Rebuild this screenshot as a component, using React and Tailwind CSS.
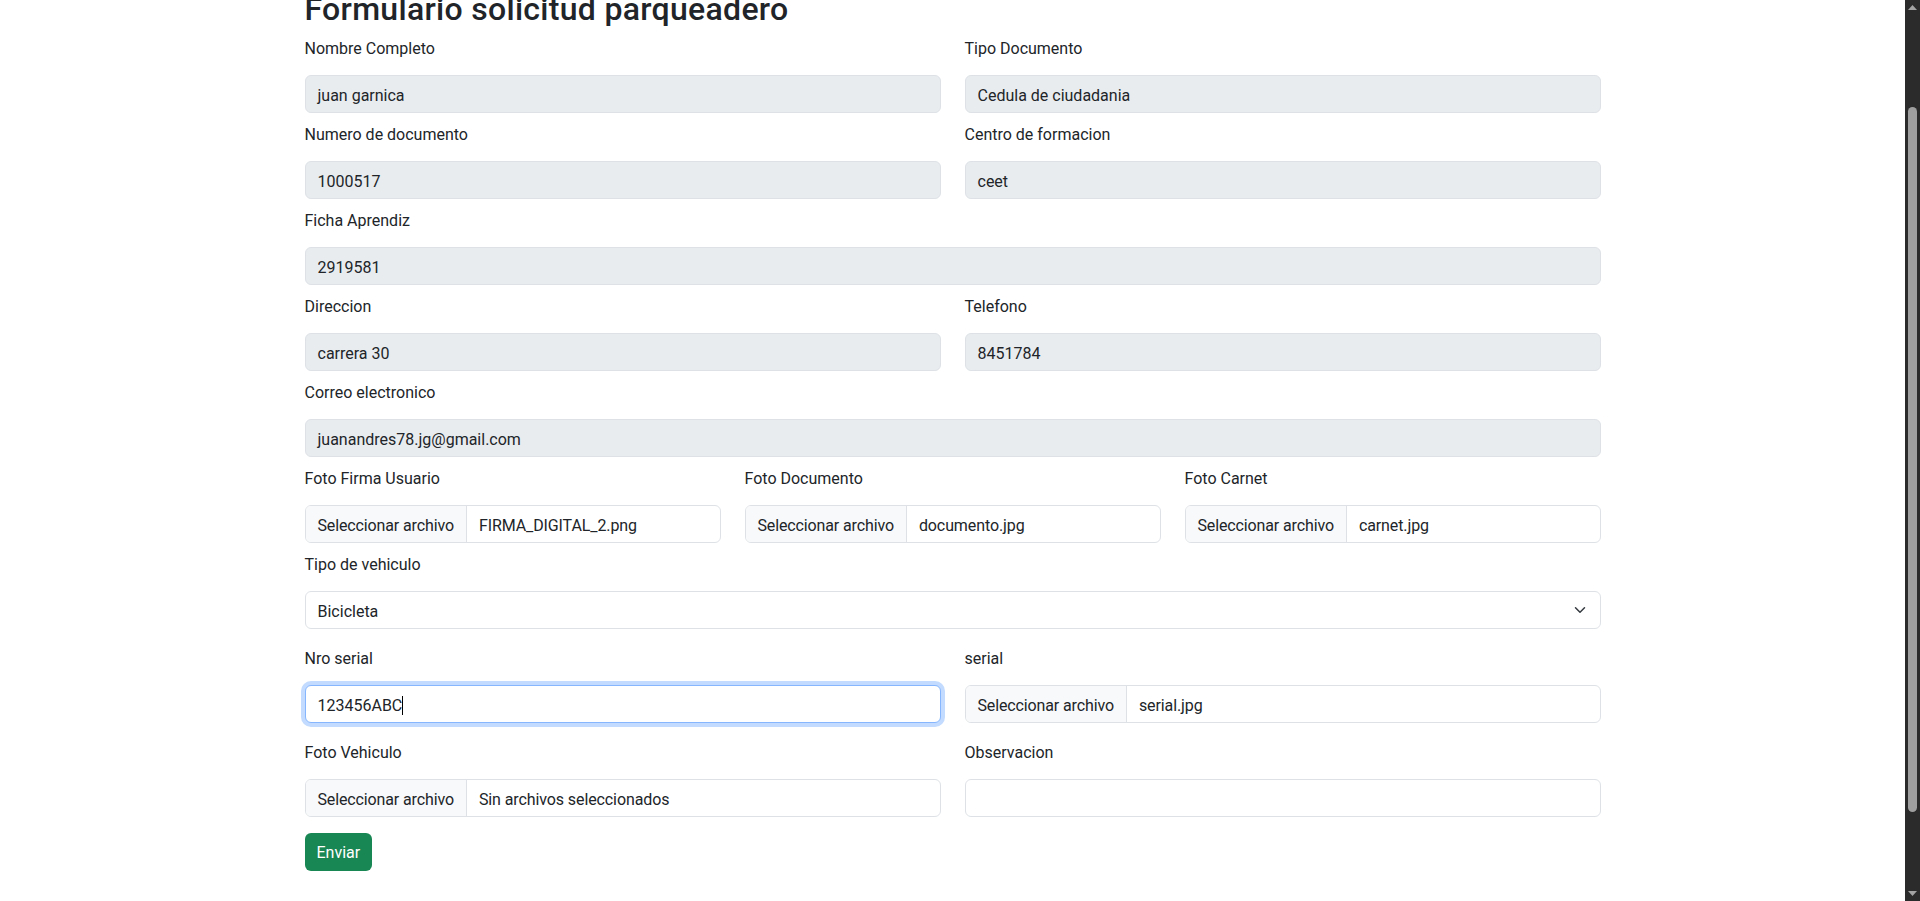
import React from 'react';

const font = { fontFamily: 'Roboto, "Noto Sans", sans-serif' };

const Label = ({ children }) => (
    <label className="block text-base leading-6 pt-px mb-[14px] text-[#212529]">{children}</label>
);

const Disabled = ({ value }) => (
    <div className="h-[38px] rounded-md border border-[#dee2e6] bg-[#e9ecef] px-3 pt-[3px] flex items-center text-base text-[#212529]">
        {value}
    </div>
);

const FileInput = ({ file }) => (
    <div className="h-[38px] rounded-md border border-[#dee2e6] bg-white flex items-stretch overflow-hidden text-base text-[#212529]">
        <span className="bg-[#f8f9fa] border-r border-[#dee2e6] px-3 pt-[3px] flex items-center whitespace-nowrap tracking-[-0.13px]">
            Seleccionar archivo
        </span>
        <span className="pl-3 pt-[3px] flex items-center whitespace-nowrap tracking-[-0.1px]">{file}</span>
    </div>
);

const Field = ({ label, children }) => (
    <div>
        <Label>{label}</Label>
        {children}
    </div>
);

const Scrollbar = () => (
    <div className="w-[15px] shrink-0 bg-[#2b2b2b] flex flex-col items-center">
        <svg width="15" height="17" viewBox="0 0 15 17" className="shrink-0">
            <polygon points="3,10 12,10 7.5,5" fill="#a3a3a3" />
        </svg>
        <div className="mt-[90px] h-[705px] w-[9px] rounded-[5px] bg-[#9f9f9f]" />
        <div className="flex-1" />
        <svg width="15" height="17" viewBox="0 0 15 17" className="shrink-0">
            <polygon points="3,7 12,7 7.5,12" fill="#a3a3a3" />
        </svg>
    </div>
);

export default function App() {
    return (
        <div className="flex h-[901px] overflow-hidden bg-white" style={font}>
            <div className="flex-1 min-w-0">
                <div className="w-[1320px] mx-auto px-3 -mt-[10px]">
                    <h2 className="text-[32px] font-medium leading-[1.2] mb-2 text-[#212529] tracking-[0.3px]">
                        Formulario solicitud parqueadero
                    </h2>

                    <div className="grid grid-cols-2 gap-x-6 mb-[9px]">
                        <Field label="Nombre Completo"><Disabled value="juan garnica" /></Field>
                        <Field label="Tipo Documento"><Disabled value="Cedula de ciudadania" /></Field>
                    </div>
                    <div className="grid grid-cols-2 gap-x-6 mb-[9px]">
                        <Field label="Numero de documento"><Disabled value="1000517" /></Field>
                        <Field label="Centro de formacion"><Disabled value="ceet" /></Field>
                    </div>
                    <div className="mb-[9px]">
                        <Field label="Ficha Aprendiz"><Disabled value="2919581" /></Field>
                    </div>
                    <div className="grid grid-cols-2 gap-x-6 mb-[9px]">
                        <Field label="Direccion"><Disabled value="carrera 30" /></Field>
                        <Field label="Telefono"><Disabled value="8451784" /></Field>
                    </div>
                    <div className="mb-[9px]">
                        <Field label="Correo electronico"><Disabled value="juanandres78.jg@gmail.com" /></Field>
                    </div>
                    <div className="grid grid-cols-3 gap-x-6 mb-[9px]">
                        <Field label="Foto Firma Usuario"><FileInput file="FIRMA_DIGITAL_2.png" /></Field>
                        <Field label="Foto Documento"><FileInput file="documento.jpg" /></Field>
                        <Field label="Foto Carnet"><FileInput file="carnet.jpg" /></Field>
                    </div>
                    <div className="mb-[17px]">
                        <Field label="Tipo de vehiculo">
                            <div className="h-[38px] rounded-md border border-[#dee2e6] bg-white pl-3 pr-3 flex items-center justify-between text-base text-[#212529]">
                                <span className="pt-[3px]">Bicicleta</span>
                                <svg width="16" height="12" viewBox="0 0 16 16" fill="none">
                                    <path d="m2 5 6 6 6-6" stroke="#343a40" strokeWidth="2" strokeLinecap="round" strokeLinejoin="round" />
                                </svg>
                            </div>
                        </Field>
                    </div>
                    <div className="grid grid-cols-2 gap-x-6 mb-[17px]">
                        <Field label="Nro serial">
                            <div className="h-[38px] rounded-md border border-[#86b7fe] bg-white px-3 flex items-center text-base text-[#212529] shadow-[0_0_0_4px_rgba(13,110,253,0.25)]">
                                <span className="pt-[3px]">123456ABC</span>
                                <span className="inline-block w-px h-[19px] mt-[2px] bg-black" />
                            </div>
                        </Field>
                        <Field label="serial"><FileInput file="serial.jpg" /></Field>
                    </div>
                    <div className="grid grid-cols-2 gap-x-6 mb-4">
                        <Field label="Foto Vehiculo"><FileInput file="Sin archivos seleccionados" /></Field>
                        <Field label="Observacion">
                            <div className="h-[38px] rounded-md border border-[#dee2e6] bg-white" />
                        </Field>
                    </div>
                    <button className="h-[38px] px-3 pt-[2px] rounded-md bg-[#198754] text-white text-base">
                        Enviar
                    </button>
                </div>
            </div>
            <Scrollbar />
        </div>
    );
}
